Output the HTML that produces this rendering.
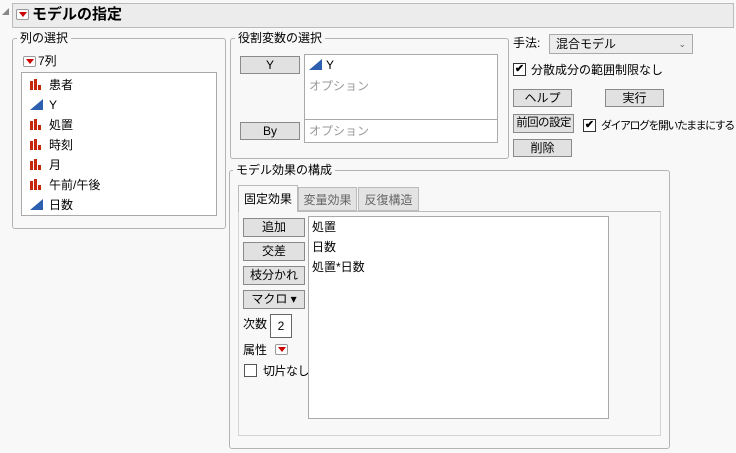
<!DOCTYPE html><html><head><meta charset="utf-8"><style>
*{box-sizing:border-box}
body{margin:0;width:736px;height:453px;background:#f8f8f8;font-family:"Liberation Sans","Noto Sans CJK JP",sans-serif;font-size:12px;color:#000;position:relative;overflow:hidden;white-space:nowrap}
.a{position:absolute}
.grp{position:absolute;border:1px solid #b4b4b4;border-radius:3px}
.lg{position:absolute;background:#f8f8f8;padding:0 3px;font-size:12px;line-height:14px}
.btn{position:absolute;background:#e1e1e1;border:1px solid #8a8a8a;text-align:center;font-size:12px;line-height:16px}
.box{position:absolute;background:#fff;border:1px solid #aaa}
.cb{position:absolute;width:13px;height:13px;border:1px solid #333;background:#fff;font-size:11px;line-height:11px;text-align:center;font-weight:bold}
.red{position:absolute;width:13px;height:11px;border:1px solid #999;background:#fff;border-radius:2px}
.red:after{content:"";position:absolute;left:2px;top:2px;border-left:4px solid transparent;border-right:4px solid transparent;border-top:5px solid #c00}
.it{position:absolute;left:8px;font-size:12px;line-height:14px}
.bar{display:inline-block;vertical-align:-1px;width:13px;height:11px;margin-right:6px;position:relative}
.bar i{position:absolute;bottom:0;background:#c8280a;width:3px}
.tri{display:inline-block;width:0;height:0;border-left:13px solid transparent;border-bottom:11px solid #2d5fb0;margin-right:6px;vertical-align:-1px}
</style></head><body>
<div class="a" style="left:2px;top:8px;width:0;height:0;border-left:7px solid transparent;border-bottom:7px solid #888"></div>
<div class="a" style="left:12px;top:3px;width:722px;height:25px;background:#ececec;border:1px solid #bbb"></div>
<div class="red" style="left:16px;top:9px"></div>
<div class="a" style="left:32px;top:5px;font-size:15px;font-weight:bold;line-height:20px">モデルの指定</div>

<div class="grp" style="left:12px;top:38px;width:214px;height:191px"></div>
<div class="lg" style="left:17px;top:31px">列の選択</div>
<div class="red" style="left:23px;top:56px"></div>
<div class="a" style="left:38px;top:54px;line-height:14px">7列</div>
<div class="box" style="left:21px;top:72px;width:196px;height:144px">
<div class="it" style="top:5px"><span class="bar"><i style="left:0;height:9px"></i><i style="left:4px;height:11px"></i><i style="left:8px;height:5px"></i></span>患者</div>
<div class="it" style="top:25px"><span class="tri"></span>Y</div>
<div class="it" style="top:45px"><span class="bar"><i style="left:0;height:9px"></i><i style="left:4px;height:11px"></i><i style="left:8px;height:5px"></i></span>処置</div>
<div class="it" style="top:65px"><span class="bar"><i style="left:0;height:9px"></i><i style="left:4px;height:11px"></i><i style="left:8px;height:5px"></i></span>時刻</div>
<div class="it" style="top:85px"><span class="bar"><i style="left:0;height:9px"></i><i style="left:4px;height:11px"></i><i style="left:8px;height:5px"></i></span>月</div>
<div class="it" style="top:105px"><span class="bar"><i style="left:0;height:9px"></i><i style="left:4px;height:11px"></i><i style="left:8px;height:5px"></i></span>午前/午後</div>
<div class="it" style="top:125px"><span class="tri"></span>日数</div>
</div>

<div class="grp" style="left:230px;top:38px;width:279px;height:121px"></div>
<div class="lg" style="left:235px;top:31px">役割変数の選択</div>
<div class="btn" style="left:240px;top:56px;width:60px;height:18px">Y</div>
<div class="box" style="left:304px;top:54px;width:194px;height:66px"></div>
<div class="a" style="left:309px;top:58px;line-height:14px"><span class="tri" style="margin-right:4px"></span>Y</div>
<div class="a" style="left:309px;top:79px;color:#999;line-height:14px">オプション</div>
<div class="btn" style="left:240px;top:122px;width:60px;height:18px">By</div>
<div class="box" style="left:304px;top:119px;width:194px;height:24px"></div>
<div class="a" style="left:309px;top:124px;color:#999;line-height:14px">オプション</div>

<div class="a" style="left:513px;top:36px;line-height:14px">手法:</div>
<div class="a" style="left:549px;top:34px;width:144px;height:20px;background:#ececec;border:1px solid #aaa;padding-left:6px;line-height:18px">混合モデル<span style="position:absolute;right:6px;top:0;font-size:9px;color:#666">⌄</span></div>
<div class="cb" style="left:513px;top:63px">✔</div>
<div class="a" style="left:531px;top:63px;line-height:14px">分散成分の範囲制限なし</div>
<div class="btn" style="left:513px;top:89px;width:59px;height:18px">ヘルプ</div>
<div class="btn" style="left:605px;top:89px;width:59px;height:18px">実行</div>
<div class="btn" style="left:513px;top:114px;width:61px;height:19px;font-size:11.5px;letter-spacing:-0.6px;overflow:hidden">前回の設定</div>
<div class="cb" style="left:583px;top:119px">✔</div>
<div class="a" style="left:601px;top:119px;line-height:14px;font-size:11px;letter-spacing:-1.5px">ダイアログを開いたままにする</div>
<div class="btn" style="left:513px;top:139px;width:59px;height:18px">削除</div>

<div class="grp" style="left:229px;top:170px;width:441px;height:279px"></div>
<div class="lg" style="left:233px;top:163px">モデル効果の構成</div>
<div class="a" style="left:238px;top:211px;width:423px;height:225px;border:1px solid #d4d4d4;border-top:1px solid #bbb;background:#f8f8f8"></div>
<div class="a" style="left:238px;top:185px;width:60px;height:27px;border:1px solid #bbb;border-bottom:none;background:#f8f8f8;text-align:center;line-height:26px">固定効果</div>
<div class="a" style="left:298px;top:187px;width:59px;height:24px;border:1px solid #bbb;background:#e3e3e3;color:#666;text-align:center;line-height:24px">変量効果</div>
<div class="a" style="left:358px;top:187px;width:61px;height:24px;border:1px solid #bbb;background:#e3e3e3;color:#666;text-align:center;line-height:24px">反復構造</div>
<div class="btn" style="left:243px;top:218px;width:62px;height:19px">追加</div>
<div class="btn" style="left:243px;top:242px;width:62px;height:19px">交差</div>
<div class="btn" style="left:243px;top:266px;width:62px;height:19px">枝分かれ</div>
<div class="btn" style="left:243px;top:290px;width:62px;height:19px">マクロ ▾</div>
<div class="a" style="left:243px;top:317px;line-height:14px">次数</div>
<div class="a" style="left:270px;top:314px;width:22px;height:24px;background:#fff;border:1px solid #666;text-align:center;line-height:22px">2</div>
<div class="a" style="left:243px;top:343px;line-height:14px">属性</div>
<div class="red" style="left:275px;top:344px"></div>
<div class="cb" style="left:244px;top:364px;border-color:#555"></div>
<div class="a" style="left:263px;top:364px;line-height:14px;letter-spacing:-0.5px">切片なし</div>
<div class="box" style="left:308px;top:216px;width:301px;height:203px">
<div class="a" style="left:3px;top:3px;line-height:14px">処置</div>
<div class="a" style="left:3px;top:23px;line-height:14px">日数</div>
<div class="a" style="left:3px;top:43px;line-height:14px">処置*日数</div>
</div>
</body></html>
